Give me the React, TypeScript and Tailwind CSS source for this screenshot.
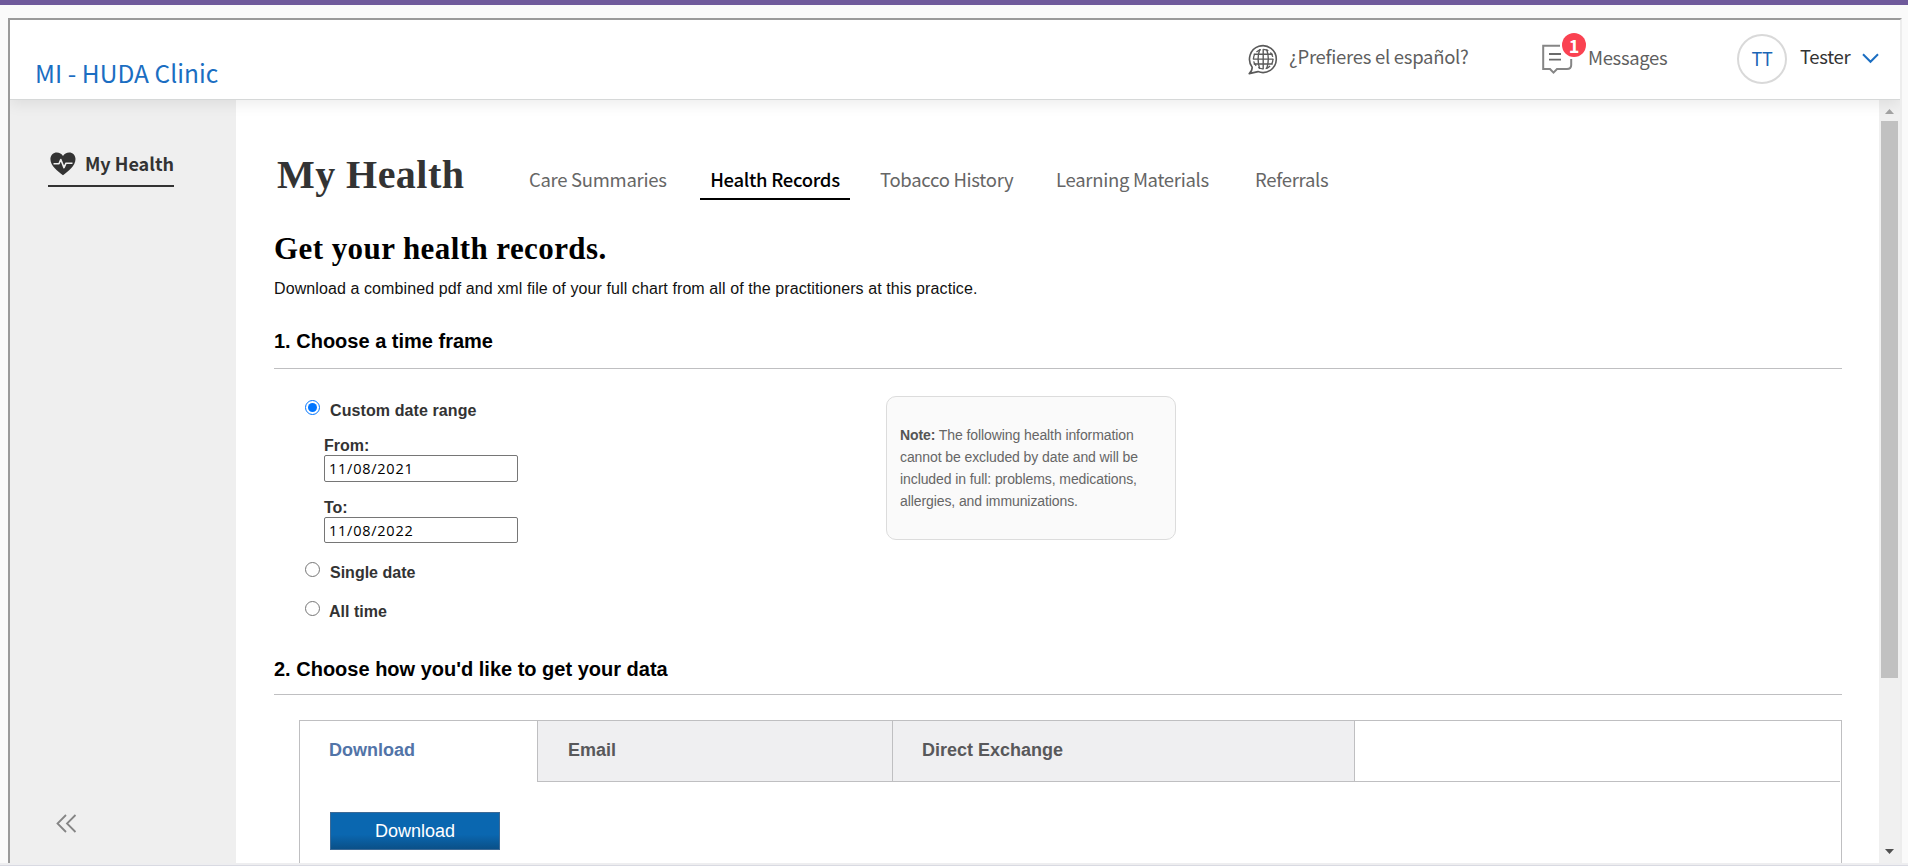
import React from "react";

const SANS = "font-['Noto_Sans_CJK_SC',sans-serif]";

function GlobeBubble() {
  return (
    <svg className="shrink-0" width="30" height="31" viewBox="0 0 30 31" fill="none" stroke="#5a5a5a" strokeWidth="1.6" strokeLinejoin="round" strokeLinecap="round">
      <path d="M4.2 23.2A13.4 13.4 0 1 1 10 27.6L1.2 29.6C3.4 27.8 4.2 25.8 4.2 23.2Z" />
      <path d="M6.2 10.2H24.2M5.4 15.1H25M6.2 20H24.2" strokeWidth="1.4" />
      <path d="M15.2 5.4V24.8M11.6 5.8Q8.6 15 11.6 24.4M18.8 5.8Q21.8 15 18.8 24.4" strokeWidth="1.4" />
      <circle cx="15.2" cy="15.1" r="9.8" strokeWidth="1.3" strokeDasharray="5.1 2.6" strokeLinecap="butt" />
    </svg>
  );
}

function MessageIcon() {
  return (
    <svg className="shrink-0" width="31" height="31" viewBox="0 0 31 31" fill="none" stroke="#858585" strokeWidth="2">
      <path d="M18 1.8H1.2V25H8L11.5 28.6L15 25H25Q29.2 25 29.2 21V15" />
      <path d="M7 10H19M7 15.7H19" stroke="#6a6a6a" strokeWidth="1.8" />
    </svg>
  );
}

function HeartPulse() {
  return (
    <svg className="shrink-0" width="26" height="24" viewBox="0 0 26 24">
      <path d="M13 23.2C8 19.2 .4 14.2 .4 7C.4 3 3.4.4 6.8.4C9.4.4 11.8 1.7 13 4C14.2 1.7 16.6.4 19.2.4C22.6.4 25.5 3 25.5 7C25.5 14.2 18 19.2 13 23.2Z" fill="#333" />
      <path d="M3.5 11.8H9L10.8 7.5L14 15.6L16 11.2H22.5" fill="none" stroke="#efefef" strokeWidth="1.6" strokeLinejoin="round" />
    </svg>
  );
}

function Header() {
  return (
    <header className={`relative z-10 flex h-[80px] shrink-0 items-start border-b border-[#d6d8d8] bg-white shadow-[0_4px_14px_rgba(0,0,0,0.08)] ${SANS}`}>
      <div className="w-[1238px] shrink-0 pt-[35px] pl-[25px] text-[24.5px] leading-[36px] tracking-[0.05px] whitespace-nowrap text-[#1b6ec2]">MI - HUDA Clinic</div>
      <div className="flex w-[294px] shrink-0 items-start pt-[24px]">
        <GlobeBubble />
        <span className="ml-[11px] text-[18.5px] leading-[24px] tracking-[-0.28px] whitespace-nowrap text-[#5f5f5f]">¿Prefieres el español?</span>
      </div>
      <div className="relative flex w-[195px] shrink-0 items-start pt-[24px]">
        <MessageIcon />
        <span className="absolute top-[13px] left-[20px] flex size-6 items-center justify-center rounded-full bg-[#fa4251] text-[18px] leading-none font-bold text-white">1</span>
        <span className="ml-[15px] text-[18.5px] leading-[26px] tracking-[-0.35px] whitespace-nowrap text-[#5f5f5f]">Messages</span>
      </div>
      <div className="flex shrink-0 items-start pt-[14px]">
        <div className="flex size-[50px] items-center justify-center rounded-full border-2 border-[#d9d9d9] pb-px text-[18px] tracking-[-0.3px] text-[#1b66b5]">TT</div>
        <span className="ml-[13px] w-[62px] pt-[10px] text-[18.5px] leading-[24px] tracking-[-0.35px] text-[#333]">Tester</span>
        <svg className="mt-[19px]" width="17" height="11" viewBox="0 0 17 11" fill="none" stroke="#1b6ec2" strokeWidth="2">
          <path d="M1 1.3L8.5 8.8L16 1.3" />
        </svg>
      </div>
    </header>
  );
}

function Sidebar() {
  return (
    <aside className={`flex w-[226px] shrink-0 flex-col bg-[#efefef] pt-[50px] pl-[38px] ${SANS}`}>
      <div className="flex h-[37px] w-[126px] items-start border-b-2 border-[#333] pt-[2px] pl-[2px]">
        <HeartPulse />
        <span className="ml-[9px] text-[18px] leading-[22px] font-bold whitespace-nowrap text-[#333]">My Health</span>
      </div>
      <svg className="mt-auto mb-[30px] ml-[8px]" width="21" height="19" viewBox="0 0 21 19" fill="none" stroke="#858585" strokeWidth="1.8">
        <path d="M10 1L1.5 9.5L10 18M19.5 1L11 9.5L19.5 18" />
      </svg>
    </aside>
  );
}

function Radio({ checked = false }: { checked?: boolean }) {
  return (
    <span className={checked ? "flex size-[15px] items-center justify-center rounded-full border border-[#0075ff] bg-white" : "size-[15px] rounded-full border border-[#767676] bg-white"}>
      {checked && <span className="size-[9px] rounded-full bg-[#0075ff]" />}
    </span>
  );
}

function PageTabs() {
  return (
    <div className="flex h-[51px] items-start">
      <h1 className="w-[249px] pt-[2px] pl-[3px] font-['Liberation_Serif',serif] text-[40px] leading-[48px] font-bold tracking-[0.45px] whitespace-nowrap text-[#333]">My Health</h1>
      <nav className={`flex pt-[12px] text-[18.5px] leading-[36px] tracking-[-0.3px] whitespace-nowrap text-[#666] ${SANS}`}>
        <span className="w-[177px] pl-[6px]">Care Summaries</span>
        <span className="h-[39px] w-[150px] border-b-2 border-black text-center font-medium text-black">Health Records</span>
        <span className="w-[176px] pl-[30px]">Tobacco History</span>
        <span className="w-[199px] pl-[30px]">Learning Materials</span>
        <span className="pl-[30px]">Referrals</span>
      </nav>
    </div>
  );
}

function DateField({ value, tall }: { value: string; tall?: boolean }) {
  return (
    <div className={`${tall ? "h-[27px]" : "h-[26px]"} w-[194px] rounded-[2px] border border-[#767676] bg-white pl-[4px] font-['Open_Sans',sans-serif] text-[14.5px] leading-[25px] font-normal tracking-[0.75px] text-black`}>{value}</div>
  );
}

function TimeFrame() {
  return (
    <section className="flex h-[273px] items-start pl-[31px] text-[16px] leading-[18px] font-bold text-[#333]">
      <div className="w-[581px] pt-[31px]">
        <div className="flex">
          <Radio checked />
          <span className="ml-[10px] pt-[2px] tracking-[0.1px]">Custom date range</span>
        </div>
        <div className="mt-[16px] pl-[19px]">
          <div className="h-[19px] pt-px">From:</div>
          <DateField value="11/08/2021" tall />
          <div className="mt-[16px] h-[19px] pt-px">To:</div>
          <DateField value="11/08/2022" />
        </div>
        <div className="mt-[19px] flex">
          <Radio />
          <span className="ml-[10px] pt-[2px]">Single date</span>
        </div>
        <div className="mt-[19px] flex">
          <Radio />
          <span className="ml-[9px] pt-[2px]">All time</span>
        </div>
      </div>
      <div className="mt-[27px] h-[144px] w-[290px] rounded-[10px] border border-[#dcdcdc] bg-[#fafafa] pt-[27px] pl-[13px] text-[14px] leading-[22px] font-normal tracking-[-0.09px] whitespace-nowrap text-[#666]">
        <b className="text-[#555]">Note:</b> The following health information
        <br />cannot be excluded by date and will be
        <br />included in full: problems, medications,
        <br />allergies, and immunizations.
      </div>
    </section>
  );
}

function Delivery() {
  return (
    <section className="ml-[25px] h-[160px] border border-b-0 border-[#bfbfc1]">
      <div className="mr-px flex h-[61px] text-[18px] leading-[20px] font-bold text-[#58585b]">
        <div className="w-[237px] pt-[19px] pl-[29px] text-[#5274a8]">Download</div>
        <div className="w-[356px] border-x border-b border-[#bfbfc1] bg-[#efeff1] pt-[19px] pl-[30px]">Email</div>
        <div className="w-[462px] border-r border-b border-[#bfbfc1] bg-[#efeff1] pt-[19px] pl-[29px]">Direct Exchange</div>
        <div className="flex-1 border-b border-[#bfbfc1]" />
      </div>
      <button className="mt-[30px] ml-[30px] block h-[38px] w-[170px] border border-[#3d6a96] bg-gradient-to-b from-[#0a67b0] from-60% to-[#0a5088] text-[18px] leading-[34px] text-white">Download</button>
    </section>
  );
}

function Scrollbar() {
  return (
    <div className="flex w-[21px] shrink-0 flex-col items-center bg-[#f0f0f0]">
      <svg width="9" height="5" viewBox="0 0 9 5" className="mt-[9px] shrink-0"><path d="M0 5L4.5 0L9 5Z" fill="#a3a3a3" /></svg>
      <div className="mt-[7px] h-[557px] w-[17px] shrink-0 bg-[#c1c1c1]" />
      <svg width="9" height="5" viewBox="0 0 9 5" className="mt-auto mb-[9px] shrink-0"><path d="M0 0L4.5 5L9 0Z" fill="#505050" /></svg>
    </div>
  );
}

export default function App() {
  return (
    <div className="flex h-[866px] w-[1908px] flex-col overflow-hidden bg-[#fafafa] font-['Liberation_Sans',sans-serif]">
      <div className="h-[5px] shrink-0 bg-[#6f5a9b]" />
      <div className="mt-[13px] ml-[8px] flex h-[845px] w-[1894px] flex-col overflow-hidden border-2 border-b-0 border-t-[#9a9a9a] border-r-[#ededed] border-l-[#9a9a9a] bg-white">
        <Header />
        <div className="flex min-h-0 flex-1">
          <Sidebar />
          <main className="flex-1 overflow-hidden pt-[49px] pr-[37px] pl-[38px]">
            <PageTabs />
            <h2 className="mt-[31px] font-['Liberation_Serif',serif] text-[31px] leading-[36px] font-bold tracking-[0.42px] text-black">Get your health records.</h2>
            <p className="mt-[12px] text-[16px] leading-[20px] tracking-[0.095px] text-[#111]">Download a combined pdf and xml file of your full chart from all of the practitioners at this practice.</p>
            <h3 className="mt-[30px] h-[40px] border-b border-[#bfbfc1] text-[20px] leading-[25px] font-bold text-black">1. Choose a time frame</h3>
            <TimeFrame />
            <h3 className="mt-[14px] h-[39px] border-b border-[#bfbfc1] text-[20px] leading-[26px] font-bold text-black">2. Choose how you'd like to get your data</h3>
            <div className="h-[25px]" />
            <Delivery />
          </main>
          <Scrollbar />
        </div>
      </div>
      <div className="h-[2px] shrink-0 bg-[#eeeef0]" />
      <div className="h-px shrink-0 bg-[#d9dae2]" />
    </div>
  );
}
